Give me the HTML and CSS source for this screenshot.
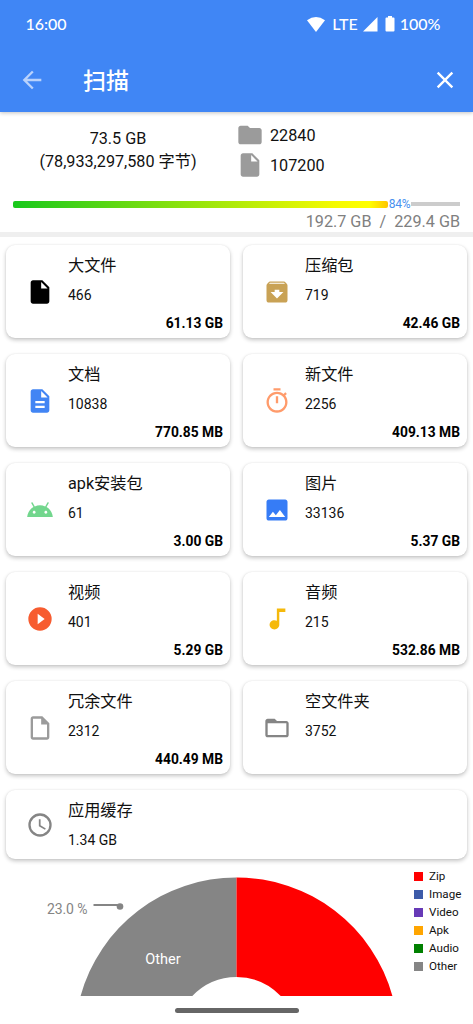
FILE: index.html
```html
<!DOCTYPE html>
<html lang="zh-CN">
<head>
<meta charset="utf-8">
<title>扫描</title>
<link rel="stylesheet" href="styles.css">
</head>
<body>
<div class="screen">
<header class="header">
  <div class="status">
    <span class="time">16:00</span>
    <svg class="wifi" width="18" height="15" viewBox="0 0 18 15"><path d="M0 3.2Q9-3 18 3.2L9 15Z"/></svg>
    <span class="lte">LTE</span>
    <svg class="signal" width="15" height="15" viewBox="0 0 15 15"><path d="M14.5 0V14.5H0Z"/></svg>
    <svg class="battery" width="10" height="16" viewBox="0 0 10 16"><path d="M3 0h4v1.5h1.5Q9.500 1.500 9.500 2.500V14.500Q9.500 15.500 8.500 15.500H1.500Q.5 15.500.5 14.500V2.500Q.5 1.500 1.500 1.500H3Z"/></svg>
    <span class="percent">100%</span>
  </div>
  <div class="toolbar">
    <svg class="back" width="28" height="28" viewBox="0 0 24 24"><path d="M20 11H7.830l5.590-5.590L12 4l-8 8 8 8 1.410-1.410L7.830 13H20z"/></svg>
    <h1 class="title">扫描</h1>
    <svg class="close" width="28" height="28" viewBox="0 0 24 24"><path d="M19 6.410 17.590 5 12 10.590 6.410 5 5 6.410 10.590 12 5 17.590 6.410 19 12 13.410 17.590 19 19 17.590 13.410 12z"/></svg>
  </div>
</header>
<section class="summary">
  <div class="overview">
    <div class="total"><div>73.5 GB</div><div>(78,933,297,580 字节)</div></div>
    <div class="counts">
      <div class="count"><svg width="28" height="28" viewBox="0 0 24 24"><path d="M10 4H4c-1.100 0-2 .9-2 2v12c0 1.100.9 2 2 2h16c1.100 0 2-.9 2-2V8c0-1.100-.9-2-2-2h-8z"/></svg><span>22840</span></div>
      <div class="count"><svg width="28" height="28" viewBox="0 0 24 24"><path d="M6 2c-1.100 0-2 .9-2 2v16c0 1.100.9 2 2 2h12c1.100 0 2-.9 2-2V8l-6-6zm7 7V3.500L18.500 9z"/></svg><span>107200</span></div>
    </div>
  </div>
  <div class="meter"><div class="used"></div><span class="ratio">84%</span><div class="rest"></div></div>
  <div class="capacity">192.7 GB&nbsp; /&nbsp; 229.4 GB</div>
</section>
<main class="cards">
  <article class="card"><svg class="icon black" viewBox="0 0 24 24"><path d="M6 2c-1.100 0-2 .9-2 2v16c0 1.100.9 2 2 2h12c1.100 0 2-.9 2-2V8l-6-6zm7 7V3.500L18.500 9z"/></svg><div class="name">大文件</div><div class="number">466</div><div class="size">61.13 GB</div></article>
  <article class="card"><svg class="icon tan" viewBox="0 0 24 24"><path d="M20.540 5.230l-1.390-1.680C18.880 3.210 18.470 3 18 3H6c-.47 0-.88.21-1.160.55L3.460 5.230C3.170 5.570 3 6.020 3 6.500V19c0 1.100.9 2 2 2h14c1.100 0 2-.9 2-2V6.500c0-.48-.17-.93-.46-1.270zM12 17.500 6.500 12H10v-2h4v2h3.500zM5.120 5l.81-1h12l.94 1z"/></svg><div class="name">压缩包</div><div class="number">719</div><div class="size">42.46 GB</div></article>
  <article class="card"><svg class="icon blue" viewBox="0 0 24 24"><path d="M14 2H6c-1.100 0-2 .9-2 2v16c0 1.100.89 2 2 2h12c1.100 0 2-.9 2-2V8zm2 16H8v-2h8zm0-4H8v-2h8zm-3-5V3.500L18.500 9z"/></svg><div class="name">文档</div><div class="number">10838</div><div class="size">770.85 MB</div></article>
  <article class="card"><svg class="icon orange" viewBox="0 0 24 24"><path d="M15 1H9v2h6zm-4 13h2V8h-2zm8.030-6.610 1.420-1.420c-.43-.51-.9-.99-1.410-1.410l-1.420 1.420C16.070 4.740 14.120 4 12 4c-4.970 0-9 4.030-9 9s4.020 9 9 9 9-4.030 9-9c0-2.120-.74-4.070-1.970-5.610zM12 20c-3.870 0-7-3.130-7-7s3.130-7 7-7 7 3.130 7 7-3.130 7-7 7z"/></svg><div class="name">新文件</div><div class="number">2256</div><div class="size">409.13 MB</div></article>
  <article class="card"><svg class="icon green" viewBox="0 0 24 24"><path d="M17.600 9.480l1.840-3.180c.16-.31.04-.69-.26-.85-.29-.15-.65-.06-.83.22l-1.880 3.240c-2.860-1.210-6.080-1.210-8.940 0L5.650 5.670c-.19-.29-.58-.38-.87-.2-.28.18-.37.540-.22.830L6.400 9.480C3.300 11.250 1.280 14.440 1 18h22c-.28-3.560-2.300-6.750-5.400-8.520zM7 15.250c-.69 0-1.250-.56-1.250-1.250S6.310 12.750 7 12.750 8.250 13.310 8.250 14 7.690 15.250 7 15.250zm10 0c-.69 0-1.250-.56-1.250-1.250s.56-1.250 1.250-1.250 1.250.56 1.250 1.250-.56 1.250-1.250 1.250z"/></svg><div class="name">apk安装包</div><div class="number">61</div><div class="size">3.00 GB</div></article>
  <article class="card"><svg class="icon azure" viewBox="0 0 24 24"><path d="M21 19V5c0-1.100-.9-2-2-2H5c-1.100 0-2 .9-2 2v14c0 1.100.9 2 2 2h14c1.100 0 2-.9 2-2zM8.500 13.500l2.500 3.010L14.500 12l4.500 6H5z"/></svg><div class="name">图片</div><div class="number">33136</div><div class="size">5.37 GB</div></article>
  <article class="card"><svg class="icon coral" viewBox="0 0 24 24"><path d="M12 2a10 10 0 1 0 0 20 10 10 0 0 0 0-20zm-2 14.500v-9l6 4.500z"/></svg><div class="name">视频</div><div class="number">401</div><div class="size">5.29 GB</div></article>
  <article class="card"><svg class="icon yellow" viewBox="0 0 24 24"><path d="M12 3v10.550c-.59-.34-1.270-.55-2-.55-2.210 0-4 1.790-4 4s1.790 4 4 4 4-1.790 4-4V6h5V3z" transform="translate(-.6 0) scale(1.04 1)"/></svg><div class="name">音频</div><div class="number">215</div><div class="size">532.86 MB</div></article>
  <article class="card"><svg class="icon silver" viewBox="0 0 24 24"><path d="M6 2c-1.100 0-2 .9-2 2v16c0 1.100.9 2 2 2h12c1.100 0 2-.9 2-2V8l-6-6zm0 2h7v5h5v11H6z" fill-rule="evenodd"/></svg><div class="name">冗余文件</div><div class="number">2312</div><div class="size">440.49 MB</div></article>
  <article class="card"><svg class="icon gray" viewBox="0 0 24 24"><path d="M20 6h-8l-2-2H4c-1.100 0-2 .9-2 2v12c0 1.100.9 2 2 2h16c1.100 0 2-.9 2-2V8c0-1.100-.9-2-2-2zm0 12H4V8h16z"/></svg><div class="name">空文件夹</div><div class="number">3752</div></article>
  <article class="card wide"><svg class="icon gray" viewBox="0 0 24 24"><path d="M12 2a10 10 0 1 0 0 20 10 10 0 0 0 0-20zm0 18a8 8 0 1 1 0-16 8 8 0 0 1 0 16zm.5-13H11v6l5.250 3.150.75-1.230-4.500-2.670z"/></svg><div class="name">应用缓存</div><div class="number">1.34 GB</div></article>
</main>
<section class="chart">
  <svg class="pie" width="400" height="137" viewBox="0 859 400 137">
    <path class="other" d="M80.500 996.300A161.500 161.500 0 0 1 236.500 877.500V977A62 62 0 0 0 192 996.300Z"/>
    <path class="zip" d="M392.500 996.300A161.500 161.500 0 0 0 236.500 877.500V977A62 62 0 0 1 281 996.300Z"/>
    <path class="leader" d="M93.500 905H117L120 906.500"/>
    <circle class="other" cx="120" cy="906.500" r="3.300"/>
    <text class="share" x="47" y="913.500" textLength="40.500">23.0 %</text>
    <text class="slice" x="163" y="963.500" text-anchor="middle">Other</text>
  </svg>
  <ul class="legend">
    <li><i class="swatch zip-bg"></i>Zip</li>
    <li><i class="swatch image-bg"></i>Image</li>
    <li><i class="swatch video-bg"></i>Video</li>
    <li><i class="swatch apk-bg"></i>Apk</li>
    <li><i class="swatch audio-bg"></i>Audio</li>
    <li><i class="swatch other-bg"></i>Other</li>
  </ul>
</section>
<div class="nav"></div>
</div>
</body>
</html>
```
FILE: styles.css
```css
* { box-sizing: border-box; }
body { margin: 0; background: #fff; color: #111; font-family: Roboto, "Noto Sans CJK SC", sans-serif; }
svg { display: block; flex: none; }
.screen { width: 473px; height: 1024px; overflow: hidden; }
.header { height: 112px; background: #4086f5; color: #fff; box-shadow: 0 1px 4px rgba(0,0,0,.24); }
.header svg { fill: #fff; }
.status { height: 48px; padding: 0 32.500px 0 25.500px; display: flex; align-items: center; font: 500 16px/20px Lato, sans-serif; }
.time { margin-right: auto; }
.wifi { margin-right: 7px; }
.lte { margin-right: 5px; }
.signal { margin-right: 7px; }
.battery { margin-right: 5px; }
.toolbar { height: 64px; padding: 0 14px 0 18px; display: flex; align-items: center; }
.header .back { fill: #b9d2fc; }
.title { margin: 3px auto 0 37px; font-size: 23px; line-height: 32px; font-weight: 500; }
.summary { height: 125px; border-bottom: 5px solid #efefef; padding: 8px 13px 0; }
.overview { display: flex; height: 79px; font-size: 16.200px; }
.total { width: 210px; padding-top: 8px; text-align: center; line-height: 22.500px; }
.counts { padding-left: 13px; }
.count { height: 30px; display: flex; align-items: center; gap: 6px; }
.count svg { fill: #9b9b9b; }
.meter { display: flex; align-items: center; height: 10px; }
.used { width: 375px; height: 7px; border-radius: 2px; background: linear-gradient(90deg, #18c81c, #f5fa00 86%, #ff0 95%, #ffc400); }
.ratio { width: 23px; font-size: 12px; line-height: 10px; letter-spacing: -.2px; color: #4890ef; text-align: center; }
.rest { flex: 1; height: 4px; background: #ccc; }
.capacity { text-align: right; font-size: 16.200px; line-height: 19px; color: #808080; margin-top: 3px; }
.cards { padding: 8px 6px 0; display: grid; grid-template-columns: 224px 224px; column-gap: 13px; row-gap: 16px; grid-auto-rows: 93px; }
.card { display: grid; grid-template-columns: 62px 1fr; grid-template-rows: 35px 30px 28px; padding-right: 7px; background: #fff; border-radius: 9px; box-shadow: 0 2px 4px rgba(0,0,0,.23), 0 0 2px rgba(0,0,0,.07); }
.icon { width: 28px; height: 28px; grid-area: 1 / 1 / 4 / 2; align-self: center; margin-left: 20.400px; }
.card:nth-child(even) .icon { margin-left: 20px; }
.name { grid-area: 1 / 2; font-size: 16.200px; line-height: 24px; padding-top: 9px; }
.number { grid-area: 2 / 2; font-size: 14px; line-height: 30px; }
.size { grid-area: 3 / 1 / 4 / 3; font-size: 13.800px; line-height: 26px; font-weight: 700; color: #000; text-align: right; }
.wide { grid-column: 1 / 3; height: 69px; grid-template-rows: 35px 30px 4px; }
.black { fill: #000; }
.tan { fill: #c9a255; }
.blue { fill: #4285f4; }
.orange { fill: #ff9b6b; }
.green { fill: #72d68d; }
.azure { fill: #367cf6; }
.coral { fill: #f75c30; }
.yellow { fill: #f5b90b; }
.silver { fill: #9b9b9b; }
.gray { fill: #858585; }
.chart { display: flex; height: 138px; margin-top: -24px; }
.pie .other { fill: #858585; }
.pie .zip { fill: #f00; }
.leader { fill: none; stroke: #858585; stroke-width: 2; }
.share { fill: #858585; font-size: 14px; }
.slice { fill: #fff; font-size: 14.500px; }
.legend { list-style: none; margin: 8px 0 0; padding: 0 0 0 14px; font-size: 11.600px; }
.legend li { display: flex; align-items: center; gap: 6px; height: 18px; }
.swatch { width: 9px; height: 9px; }
.zip-bg { background: #f00; }
.image-bg { background: #3d5ba9; }
.video-bg { background: #673ab7; }
.apk-bg { background: #ffa500; }
.audio-bg { background: #008000; }
.other-bg { background: #858585; }
.nav { width: 124px; height: 5px; border-radius: 3px; background: #666; margin: 11px auto 0; }
```
